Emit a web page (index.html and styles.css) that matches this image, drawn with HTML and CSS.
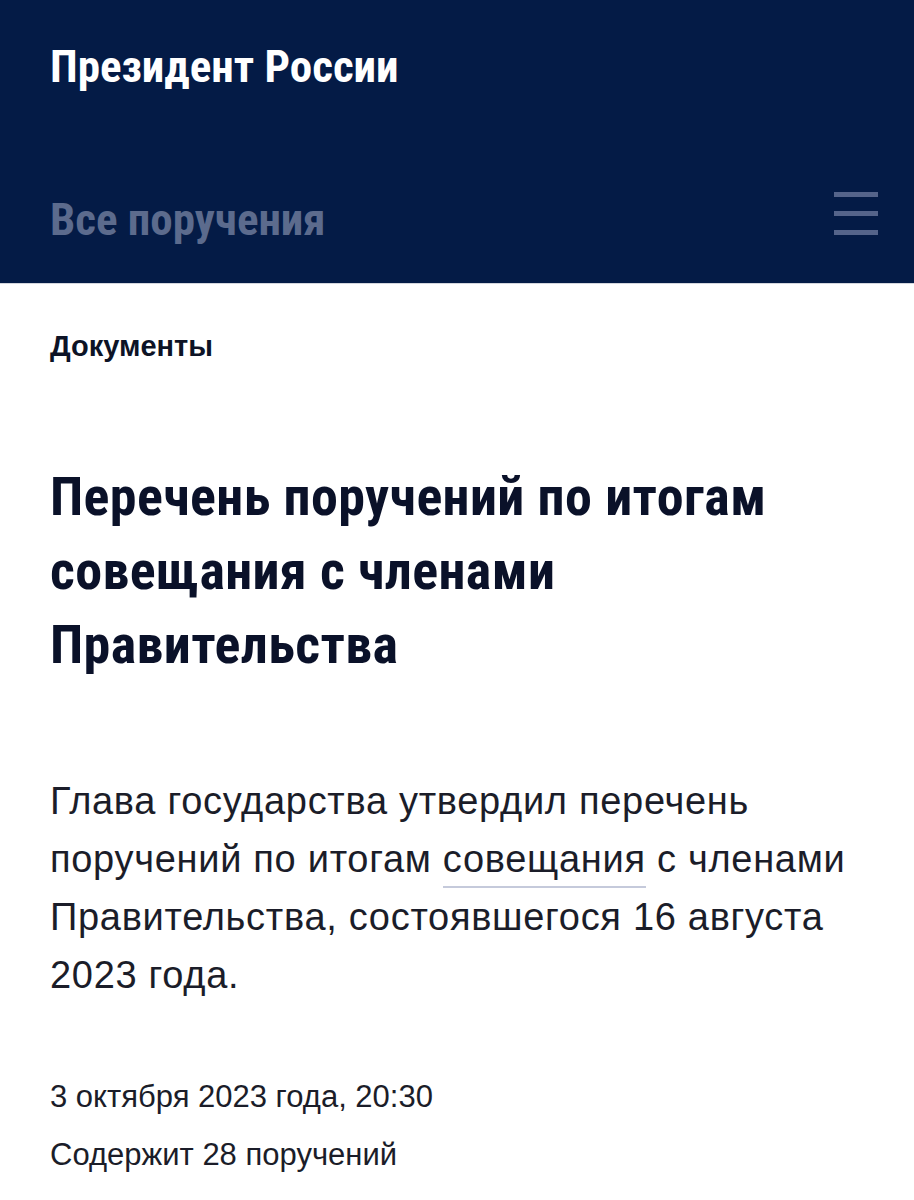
FILE: index.html
```html
<!DOCTYPE html>
<html lang="ru">
<head>
<meta charset="utf-8">
<title>Президент России</title>
<link rel="stylesheet" href="styles.css">
</head>
<body>
<header class="site-header">
  <div class="brand">Президент России</div>
  <div class="nav-row">
    <div class="nav-title">Все поручения</div>
    <button class="menu-btn" aria-label="Меню">
      <span class="bar"></span><span class="bar"></span><span class="bar"></span>
    </button>
  </div>
</header>
<main class="content">
  <div class="section">Документы</div>
  <h1 class="title">Перечень поручений по итогам совещания с членами Правительства</h1>
  <p class="lead">Глава государства утвердил перечень поручений по итогам <a class="link" href="#">совещания</a> с членами Правительства, состоявшегося 16 августа 2023 года.</p>
  <div class="meta">3 октября 2023 года, 20:30</div>
  <div class="meta">Содержит 28 поручений</div>
</main>
</body>
</html>
```
FILE: styles.css
```css
body {
  margin: 0;
  background: #ffffff;
  font-family: "Liberation Sans", Arial, sans-serif;
}
.site-header {
  background: #041b46;
  height: 284px;
  box-sizing: border-box;
  padding: 44px 36px 0 50px;
  border-bottom: 1px solid #d3d6dd;
}
.brand {
  font-family: Roboto, sans-serif;
  font-stretch: 75%;
  font-weight: 700;
  font-size: 45px;
  line-height: 45px;
  color: #ffffff;
}
.nav-row {
  display: flex;
  justify-content: space-between;
  align-items: flex-start;
  margin-top: 108px;
}
.nav-title {
  font-family: Roboto, sans-serif;
  font-stretch: 75%;
  font-weight: 700;
  font-size: 45px;
  line-height: 45px;
  color: #5c6b8d;
}
.menu-btn {
  background: none;
  border: 0;
  padding: 0;
  margin-top: -5px;
  width: 44px;
  display: flex;
  flex-direction: column;
  gap: 14px;
}
.bar {
  display: block;
  height: 5px;
  width: 44px;
  background: #55648a;
}
.content {
  padding: 0 40px 0 50px;
}
.section {
  margin-top: 44px;
  font-size: 29px;
  line-height: 36px;
  font-weight: 700;
  color: #0d1326;
}
.title {
  margin: 96px 0 0;
  font-family: Roboto, sans-serif;
  font-stretch: 75%;
  font-weight: 700;
  font-size: 54px;
  line-height: 74px;
  letter-spacing: 0.4px;
  color: #0a1129;
}
.lead {
  margin: 90px 0 0;
  font-size: 38px;
  line-height: 58px;
  letter-spacing: 0.7px;
  font-weight: 400;
  color: #1b1d29;
}
.link {
  color: inherit;
  text-decoration: none;
  border-bottom: 2px solid #c5cadb;
  padding-bottom: 6px;
}
.meta {
  font-size: 31px;
  line-height: 58px;
  color: #1b1d29;
}
.lead + .meta {
  margin-top: 64px;
}
```
